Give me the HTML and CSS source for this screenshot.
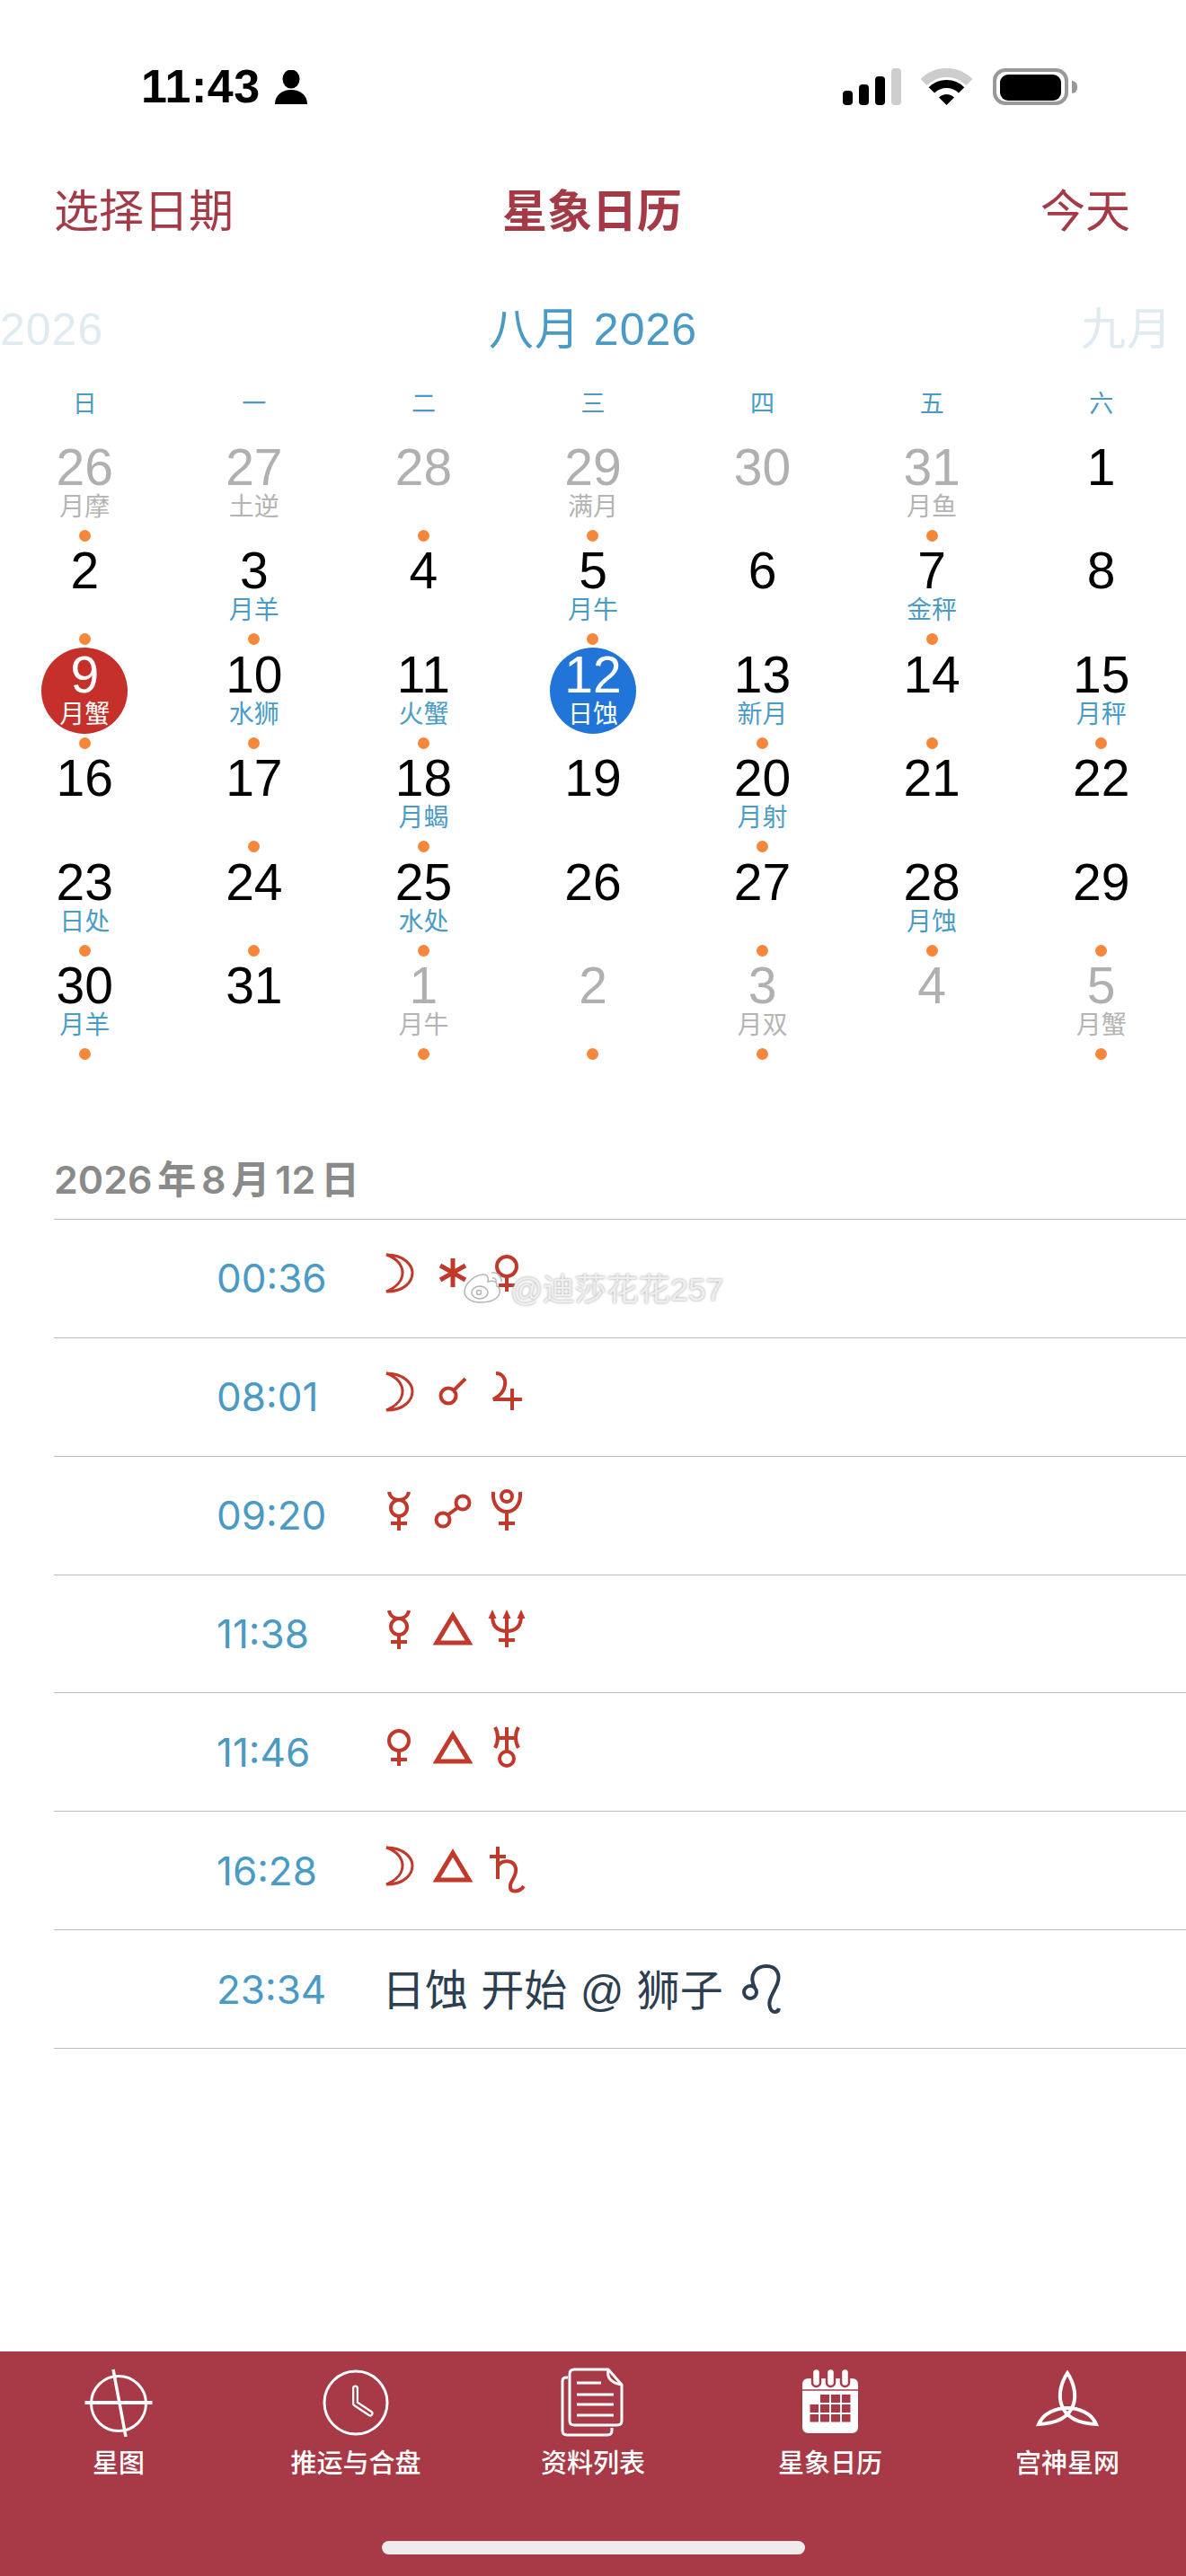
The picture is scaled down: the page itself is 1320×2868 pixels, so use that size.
FILE: index.html
```html
<!DOCTYPE html>
<html lang="zh-CN">
<head>
    <meta charset="UTF-8">
    <meta name="viewport" content="width=device-width, initial-scale=1.0">
    <title>星象日历</title>
    <link rel="stylesheet" href="styles.css">
</head>
<body>
    <svg class="symbolDefs" width="0" height="0">
        <defs>
            <path id="g-moon" stroke-width="3" d="M16 10C36 10 45 22 45 30C45 40 36 51 16 51C28 46 34 38 34 30C34 22 28 14 16 10Z"/>
            <g id="g-sextile"><path d="M30 14V46M16 22L44 38M16 38L44 22"/></g>
            <g id="g-venus"><circle cx="30" cy="23" r="11"/><path d="M30 34V51M21 44H39"/></g>
            <g id="g-mercury"><path d="M19 10C20 16 25 19 30 19C35 19 40 16 41 10"/><circle cx="30" cy="28" r="9"/><path d="M30 37V53M21 45H39"/></g>
            <g id="g-conjunct"><circle cx="25" cy="35" r="8.5"/><path d="M31 29L44 16"/></g>
            <g id="g-oppose"><circle cx="19" cy="41" r="7.5"/><circle cx="41" cy="22" r="7.5"/><path d="M24 36L36 27"/></g>
            <g id="g-jupiter"><path d="M18 10C26 10 29 17 28 23C27 31 21 36 15 39H47M36 27V51"/></g>
            <g id="g-pluto"><circle cx="30" cy="15" r="6"/><path d="M15 10C14 24 21 32 30 32C39 32 46 24 45 10M30 32V53M21 45H39"/></g>
            <path id="g-trine" d="M30 16L12 46H48Z"/>
            <g id="g-neptune"><path d="M14 16C14 28 20 33 30 33C40 33 46 28 46 16M30 14V51M21 43H39"/><path class="fillTip" d="M14 9L18.5 19H9.5ZM30 9L34.5 19H25.5ZM46 9L50.5 19H41.5Z"/></g>
            <g id="g-uranus"><path d="M17 8C21 15 21 24 17 31M43 8C39 15 39 24 43 31M30 8V35M18 20H42"/><circle cx="30" cy="43" r="8"/></g>
            <g id="g-saturn"><path d="M20 9V45M11 20H29M20 31C24 23 38 23 40 33C42 42 32 48 34 55C35 60 44 60 49 53"/></g>
        </defs>
    </svg>

    <div class="statusBar">
        <div class="statusLeft">
            <span class="statusTime">11:43</span>
            <svg class="personIcon" viewBox="0 0 36 38"><ellipse cx="18" cy="10" rx="9.5" ry="10.5"/><path d="M0 38C0 28 8 22 18 22C28 22 36 28 36 38Z"/></svg>
        </div>
        <div class="statusRight">
            <div class="signalBars"><i class="bar1"></i><i class="bar2"></i><i class="bar3"></i><i class="bar4"></i></div>
            <svg class="wifiIcon" viewBox="0 0 58 41">
                <path d="M3 15.5A36 36 0 0 1 54 15.5" fill="none" stroke="#cdcdcd" stroke-width="10"/>
                <path d="M11.9 24.4A23.5 23.5 0 0 1 45.1 24.4" fill="none" stroke="#000" stroke-width="9"/>
                <path d="M28.5 41L20 32.5A12 12 0 0 1 37 32.5Z"/>
            </svg>
            <div class="battery"><div class="batteryBody"><div class="batteryFill"></div></div><div class="batteryCap"></div></div>
        </div>
    </div>

    <div class="navBar">
        <span class="navLink">选择日期</span>
        <span class="navTitle">星象日历</span>
        <span class="navLink navRight">今天</span>
    </div>

    <div class="monthRow">
        <span class="monthFaded">2026</span>
        <span class="monthCurrent">八月 2026</span>
        <span class="monthFaded monthNext">九月</span>
    </div>

    <div class="weekRow">
        <span>日</span><span>一</span><span>二</span><span>三</span><span>四</span><span>五</span><span>六</span>
    </div>

    <div class="dayGrid">
        <div class="day other"><div class="face"><b>26</b><small>月摩</small></div><i class="dot"></i></div>
        <div class="day other"><div class="face"><b>27</b><small>土逆</small></div></div>
        <div class="day other"><div class="face"><b>28</b></div><i class="dot"></i></div>
        <div class="day other"><div class="face"><b>29</b><small>满月</small></div><i class="dot"></i></div>
        <div class="day other"><div class="face"><b>30</b></div></div>
        <div class="day other"><div class="face"><b>31</b><small>月鱼</small></div><i class="dot"></i></div>
        <div class="day"><div class="face"><b>1</b></div></div>

        <div class="day"><div class="face"><b>2</b></div><i class="dot"></i></div>
        <div class="day"><div class="face"><b>3</b><small>月羊</small></div><i class="dot"></i></div>
        <div class="day"><div class="face"><b>4</b></div></div>
        <div class="day"><div class="face"><b>5</b><small>月牛</small></div><i class="dot"></i></div>
        <div class="day"><div class="face"><b>6</b></div></div>
        <div class="day"><div class="face"><b>7</b><small>金秤</small></div><i class="dot"></i></div>
        <div class="day"><div class="face"><b>8</b></div></div>

        <div class="day today"><div class="face"><b>9</b><small>月蟹</small></div><i class="dot"></i></div>
        <div class="day"><div class="face"><b>10</b><small>水狮</small></div><i class="dot"></i></div>
        <div class="day"><div class="face"><b>11</b><small>火蟹</small></div><i class="dot"></i></div>
        <div class="day selected"><div class="face"><b>12</b><small>日蚀</small></div></div>
        <div class="day"><div class="face"><b>13</b><small>新月</small></div><i class="dot"></i></div>
        <div class="day"><div class="face"><b>14</b></div><i class="dot"></i></div>
        <div class="day"><div class="face"><b>15</b><small>月秤</small></div><i class="dot"></i></div>

        <div class="day"><div class="face"><b>16</b></div></div>
        <div class="day"><div class="face"><b>17</b></div><i class="dot"></i></div>
        <div class="day"><div class="face"><b>18</b><small>月蝎</small></div><i class="dot"></i></div>
        <div class="day"><div class="face"><b>19</b></div></div>
        <div class="day"><div class="face"><b>20</b><small>月射</small></div><i class="dot"></i></div>
        <div class="day"><div class="face"><b>21</b></div></div>
        <div class="day"><div class="face"><b>22</b></div></div>

        <div class="day"><div class="face"><b>23</b><small>日处</small></div><i class="dot"></i></div>
        <div class="day"><div class="face"><b>24</b></div><i class="dot"></i></div>
        <div class="day"><div class="face"><b>25</b><small>水处</small></div><i class="dot"></i></div>
        <div class="day"><div class="face"><b>26</b></div></div>
        <div class="day"><div class="face"><b>27</b></div><i class="dot"></i></div>
        <div class="day"><div class="face"><b>28</b><small>月蚀</small></div><i class="dot"></i></div>
        <div class="day"><div class="face"><b>29</b></div><i class="dot"></i></div>

        <div class="day"><div class="face"><b>30</b><small>月羊</small></div><i class="dot"></i></div>
        <div class="day"><div class="face"><b>31</b></div></div>
        <div class="day other"><div class="face"><b>1</b><small>月牛</small></div><i class="dot"></i></div>
        <div class="day other"><div class="face"><b>2</b></div><i class="dot"></i></div>
        <div class="day other"><div class="face"><b>3</b><small>月双</small></div><i class="dot"></i></div>
        <div class="day other"><div class="face"><b>4</b></div></div>
        <div class="day other"><div class="face"><b>5</b><small>月蟹</small></div><i class="dot"></i></div>
    </div>

    <div class="dateHeading">2026 年 8 月 12 日</div>

    <div class="eventList">
        <div class="eventRow">
            <span class="eventTime">00:36</span>
            <div class="glyphs">
                <svg viewBox="0 0 60 60"><use href="#g-moon"/></svg>
                <svg viewBox="0 0 60 60" class="heavy"><use href="#g-sextile"/></svg>
                <svg viewBox="0 0 60 60"><use href="#g-venus"/></svg>
            </div>
        </div>
        <div class="eventRow">
            <span class="eventTime">08:01</span>
            <div class="glyphs">
                <svg viewBox="0 0 60 60"><use href="#g-moon"/></svg>
                <svg viewBox="0 0 60 60"><use href="#g-conjunct"/></svg>
                <svg viewBox="0 0 60 60"><use href="#g-jupiter"/></svg>
            </div>
        </div>
        <div class="eventRow">
            <span class="eventTime">09:20</span>
            <div class="glyphs">
                <svg viewBox="0 0 60 60"><use href="#g-mercury"/></svg>
                <svg viewBox="0 0 60 60"><use href="#g-oppose"/></svg>
                <svg viewBox="0 0 60 60"><use href="#g-pluto"/></svg>
            </div>
        </div>
        <div class="eventRow">
            <span class="eventTime">11:38</span>
            <div class="glyphs">
                <svg viewBox="0 0 60 60"><use href="#g-mercury"/></svg>
                <svg viewBox="0 0 60 60" class="heavy"><use href="#g-trine"/></svg>
                <svg viewBox="0 0 60 60"><use href="#g-neptune"/></svg>
            </div>
        </div>
        <div class="eventRow">
            <span class="eventTime">11:46</span>
            <div class="glyphs">
                <svg viewBox="0 0 60 60"><use href="#g-venus"/></svg>
                <svg viewBox="0 0 60 60" class="heavy"><use href="#g-trine"/></svg>
                <svg viewBox="0 0 60 60"><use href="#g-uranus"/></svg>
            </div>
        </div>
        <div class="eventRow">
            <span class="eventTime">16:28</span>
            <div class="glyphs">
                <svg viewBox="0 0 60 60"><use href="#g-moon"/></svg>
                <svg viewBox="0 0 60 60" class="heavy"><use href="#g-trine"/></svg>
                <svg viewBox="0 0 60 60"><use href="#g-saturn"/></svg>
            </div>
        </div>
        <div class="eventRow">
            <span class="eventTime">23:34</span>
            <div class="eventText">
                <span class="eventLabel">日蚀 开始 @ 狮子</span>
                <svg class="leoIcon" viewBox="0 0 60 60"><circle cx="18" cy="33" r="7"/><path d="M23 28C16 14 24 4 36 4C48 4 52 14 48 24C44 34 37 42 40 50C42 57 49 56 50 51"/></svg>
            </div>
        </div>

        <!-- 水印 -->
        <div class="watermark">
            <svg viewBox="0 0 50 40"><path d="M20 38C9 38 2 33 2 26C2 17 14 7 23 7C28 7 29 11 28 15C34 13 39 15 38 20C44 22 44 38 20 38Z"/><ellipse cx="19" cy="27" rx="9" ry="7"/><circle cx="18" cy="27" r="2.5"/><path d="M32 5C38 4 44 9 43 15M33 11C36 11 38 13 37 15"/></svg>
            <span>@迪莎花花257</span>
        </div>
    </div>

    <div class="tabBar">
        <div class="tabItems">
            <div class="tabItem">
                <svg viewBox="0 0 80 80" class="tabLine">
                    <circle cx="40" cy="41" r="30.5"/>
                    <path d="M2.5 40H77.5" stroke-width="4"/>
                    <path d="M34 3L48 78" stroke-width="3.5"/>
                </svg>
                <span>星图</span>
            </div>
            <div class="tabItem">
                <svg viewBox="0 0 80 80" class="tabLine">
                    <circle cx="40" cy="40" r="35"/>
                    <path d="M39.5 24V41L56 52" stroke-width="7" stroke-linecap="round" stroke-linejoin="round"/>
                    <path d="M39.5 24V41L56 52" stroke-width="2.5" stroke="#a73a46" stroke-linecap="round" stroke-linejoin="round"/>
                </svg>
                <span>推运与合盘</span>
            </div>
            <div class="tabItem">
                <svg viewBox="0 0 80 80" class="tabLine">
                    <path d="M12 12H10Q6 12 6 16V71Q6 76 11 76H56Q61 76 61 71V68"/>
                    <path d="M19 3H57L72 20V60Q72 65 67 65H19Q14 65 14 60V8Q14 3 19 3Z"/>
                    <path d="M57 3Q54 17 72 20"/>
                    <path d="M22 18H49M22 31H63M22 42H63M22 54H63" stroke-width="3"/>
                </svg>
                <span>资料列表</span>
            </div>
            <div class="tabItem">
                <svg viewBox="0 0 80 80">
                    <path d="M16 13H64Q71 13 71 20V67Q71 74 64 74H16Q9 74 9 67V20Q9 13 16 13Z" fill="#fff"/>
                    <path d="M9 26H71" stroke="#a73a46" stroke-width="1.5"/>
                    <g fill="#fff" stroke="#a73a46" stroke-width="2.5">
                        <rect x="20" y="2" width="9" height="20" rx="4.5"/>
                        <rect x="36" y="2" width="9" height="20" rx="4.5"/>
                        <rect x="52" y="2" width="9" height="20" rx="4.5"/>
                    </g>
                    <g fill="#a73a46">
                        <rect x="29" y="31" width="10" height="9"/><rect x="41" y="31" width="10" height="9"/><rect x="53" y="31" width="9.5" height="9"/>
                        <rect x="17.5" y="42" width="9.5" height="9"/><rect x="29" y="42" width="10" height="9"/><rect x="41" y="42" width="10" height="9"/><rect x="53" y="42" width="9.5" height="9"/>
                        <rect x="17.5" y="53" width="9.5" height="8.5"/><rect x="29" y="53" width="10" height="8.5"/><rect x="41" y="53" width="10" height="8.5"/><rect x="53" y="53" width="9.5" height="8.5"/>
                    </g>
                </svg>
                <span>星象日历</span>
            </div>
            <div class="tabItem">
                <svg viewBox="0 0 80 80" class="tabLine knot">
                    <path d="M40 7C26 28 26 62 72 64C62 40 18 40 8 64C54 62 54 28 40 7Z"/>
                </svg>
                <span>宫神星网</span>
            </div>
        </div>
        <div class="homeBar"></div>
    </div>
</body>
</html>
```

FILE: styles.css
```css
* {
    box-sizing: border-box;
}

body {
    margin: 0;
    width: 1320px;
    height: 2868px;
    overflow: hidden;
    display: flex;
    flex-direction: column;
    background: #fff;
    font-family: "Liberation Sans", "Noto Sans CJK SC", sans-serif;
}

.symbolDefs {
    position: absolute;
}

/* 상태바 */
.statusBar {
    height: 194px;
    padding: 76px 121px 0 157px;
    display: flex;
    justify-content: space-between;
    align-items: flex-start;
}
.statusLeft {
    display: flex;
    align-items: center;
    gap: 16px;
    height: 41px;
}
.statusTime {
    font-size: 52px;
    line-height: 41px;
    font-weight: 700;
    letter-spacing: 0.5px;
    color: #000;
}
.personIcon {
    width: 36px;
    height: 38px;
}
.statusRight {
    display: flex;
    align-items: flex-end;
    height: 41px;
}
.signalBars {
    display: flex;
    align-items: flex-end;
    gap: 7px;
    height: 41px;
}
.signalBars i {
    display: block;
    width: 11px;
    border-radius: 4px;
    background: #000;
}
.signalBars .bar1 { height: 16px; }
.signalBars .bar2 { height: 23px; }
.signalBars .bar3 { height: 32px; }
.signalBars .bar4 { height: 41px; background: #cdcdcd; }
.wifiIcon {
    width: 58px;
    height: 41px;
    margin-left: 22px;
}
.battery {
    display: flex;
    align-items: center;
    margin-left: 22px;
    height: 41px;
}
.batteryBody {
    width: 84px;
    height: 41px;
    padding: 3px 4px;
    border: 4px solid #999;
    border-radius: 14px;
}
.batteryFill {
    width: 68px;
    height: 29px;
    background: #000;
    border-radius: 9px;
}
.batteryCap {
    width: 6px;
    height: 14px;
    margin-left: 4px;
    background: #999;
    border-radius: 0 6px 6px 0;
}

/* 네비게이션 */
.navBar {
    height: 84px;
    padding: 0 62px 0 60px;
    display: grid;
    grid-template-columns: 1fr auto 1fr;
    align-items: center;
    font-size: 50px;
    line-height: 60px;
    color: #a33a46;
}
.navTitle {
    font-weight: 700;
}
.navRight {
    justify-self: end;
}

.monthRow {
    height: 80px;
    margin-top: 49px;
    display: grid;
    grid-template-columns: 1fr auto 1fr;
    align-items: center;
    font-size: 50px;
    line-height: 60px;
    letter-spacing: 1px;
    color: #4a9ac6;
}
.monthFaded {
    color: #dfebf1;
}
.monthNext {
    justify-self: end;
    margin-right: 15px;
}

.weekRow {
    height: 40px;
    margin-top: 20px;
    display: grid;
    grid-template-columns: repeat(7, 1fr);
    align-items: center;
    text-align: center;
    font-size: 27px;
    color: #4a9ac6;
}

/* 달력 */
.dayGrid {
    margin-top: 23px;
    display: grid;
    grid-template-columns: repeat(7, 1fr);
    grid-auto-rows: 115.4px;
}
.day {
    display: flex;
    flex-direction: column;
    align-items: center;
}
.face {
    width: 96px;
    height: 96px;
    flex: none;
    border-radius: 50%;
    display: flex;
    flex-direction: column;
    align-items: center;
    color: #000;
}
.face b {
    display: block;
    height: 55px;
    margin-top: 3px;
    font-size: 57px;
    line-height: 55px;
    font-weight: 400;
}
.face small {
    display: block;
    height: 34px;
    font-size: 28px;
    line-height: 34px;
    color: #4a9cc7;
}
.dot {
    display: block;
    width: 13px;
    height: 13px;
    margin-top: 4px;
    border-radius: 50%;
    background: #f5873a;
}
.day.other .face b {
    color: #b0b0b0;
}
.day.other .face small {
    color: #b4b4b4;
}
.day.today .face {
    background: #c5302a;
}
.day.selected .face {
    background: #2175d9;
}
.day.today .face b,
.day.today .face small,
.day.selected .face b,
.day.selected .face small {
    color: #fff;
}

.dateHeading {
    height: 50px;
    margin-top: 105.6px;
    padding-left: 60px;
    font-family: Inter, "Noto Sans CJK SC", sans-serif;
    font-size: 43px;
    line-height: 50px;
    font-weight: 600;
    word-spacing: -5px;
    color: #8a8a8a;
}

/* 목록 */
.eventList {
    position: relative;
    margin: 19px 0 0 60px;
    border-top: 1px solid #bdbdbd;
}
.eventRow {
    height: 131.86px;
    padding-left: 181px;
    border-bottom: 1px solid #bdbdbd;
    display: flex;
    align-items: center;
}
.eventTime {
    width: 173px;
    font-family: Inter, "Liberation Sans", sans-serif;
    font-size: 44px;
    color: #4a9ac6;
}
.glyphs {
    display: flex;
    margin-bottom: 12px;
}
.glyphs svg {
    width: 60px;
    height: 60px;
    overflow: visible;
    fill: none;
    stroke: #c0392b;
    stroke-width: 4;
}
.glyphs svg.heavy {
    stroke-width: 5;
}
.fillTip {
    fill: #c0392b;
    stroke: none;
}
.eventText {
    display: flex;
    align-items: center;
    margin-left: 11px;
    font-size: 48px;
    color: #2c3e50;
}
.eventLabel {
    margin-bottom: 6px;
    word-spacing: 1px;
}
.leoIcon {
    width: 60px;
    height: 60px;
    margin-left: 12px;
    fill: none;
    stroke: #2c3e50;
    stroke-width: 4;
}

.watermark {
    position: absolute;
    top: 49px;
    left: 455px;
    display: flex;
    align-items: center;
    gap: 3px;
    font-size: 35.5px;
    color: #eeeeee;
    text-shadow: 0 0 3px #9a9a9a;
}
.watermark svg {
    width: 50px;
    height: 40px;
    fill: #fff;
    stroke: #b5b5b5;
    stroke-width: 1.5;
}
.watermark svg path:last-child {
    fill: none;
}

/* 하단 탭 */
.tabBar {
    margin-top: auto;
    height: 250px;
    flex: none;
    padding-top: 17px;
    background: #a73a46;
    display: flex;
    flex-direction: column;
    align-items: center;
}
.tabItems {
    width: 100%;
    display: grid;
    grid-template-columns: repeat(5, 1fr);
}
.tabItem {
    display: flex;
    flex-direction: column;
    align-items: center;
    font-size: 29px;
    font-weight: 500;
    line-height: 36px;
    color: #fff;
}
.tabItem svg {
    width: 80px;
    height: 80px;
    margin-bottom: 10px;
}
.tabLine {
    fill: none;
    stroke: #fff;
    stroke-width: 3;
}
.tabLine.knot {
    stroke-width: 4;
}
.homeBar {
    width: 471px;
    height: 15px;
    margin-top: 68px;
    border-radius: 8px;
    background: #efebed;
}
```
